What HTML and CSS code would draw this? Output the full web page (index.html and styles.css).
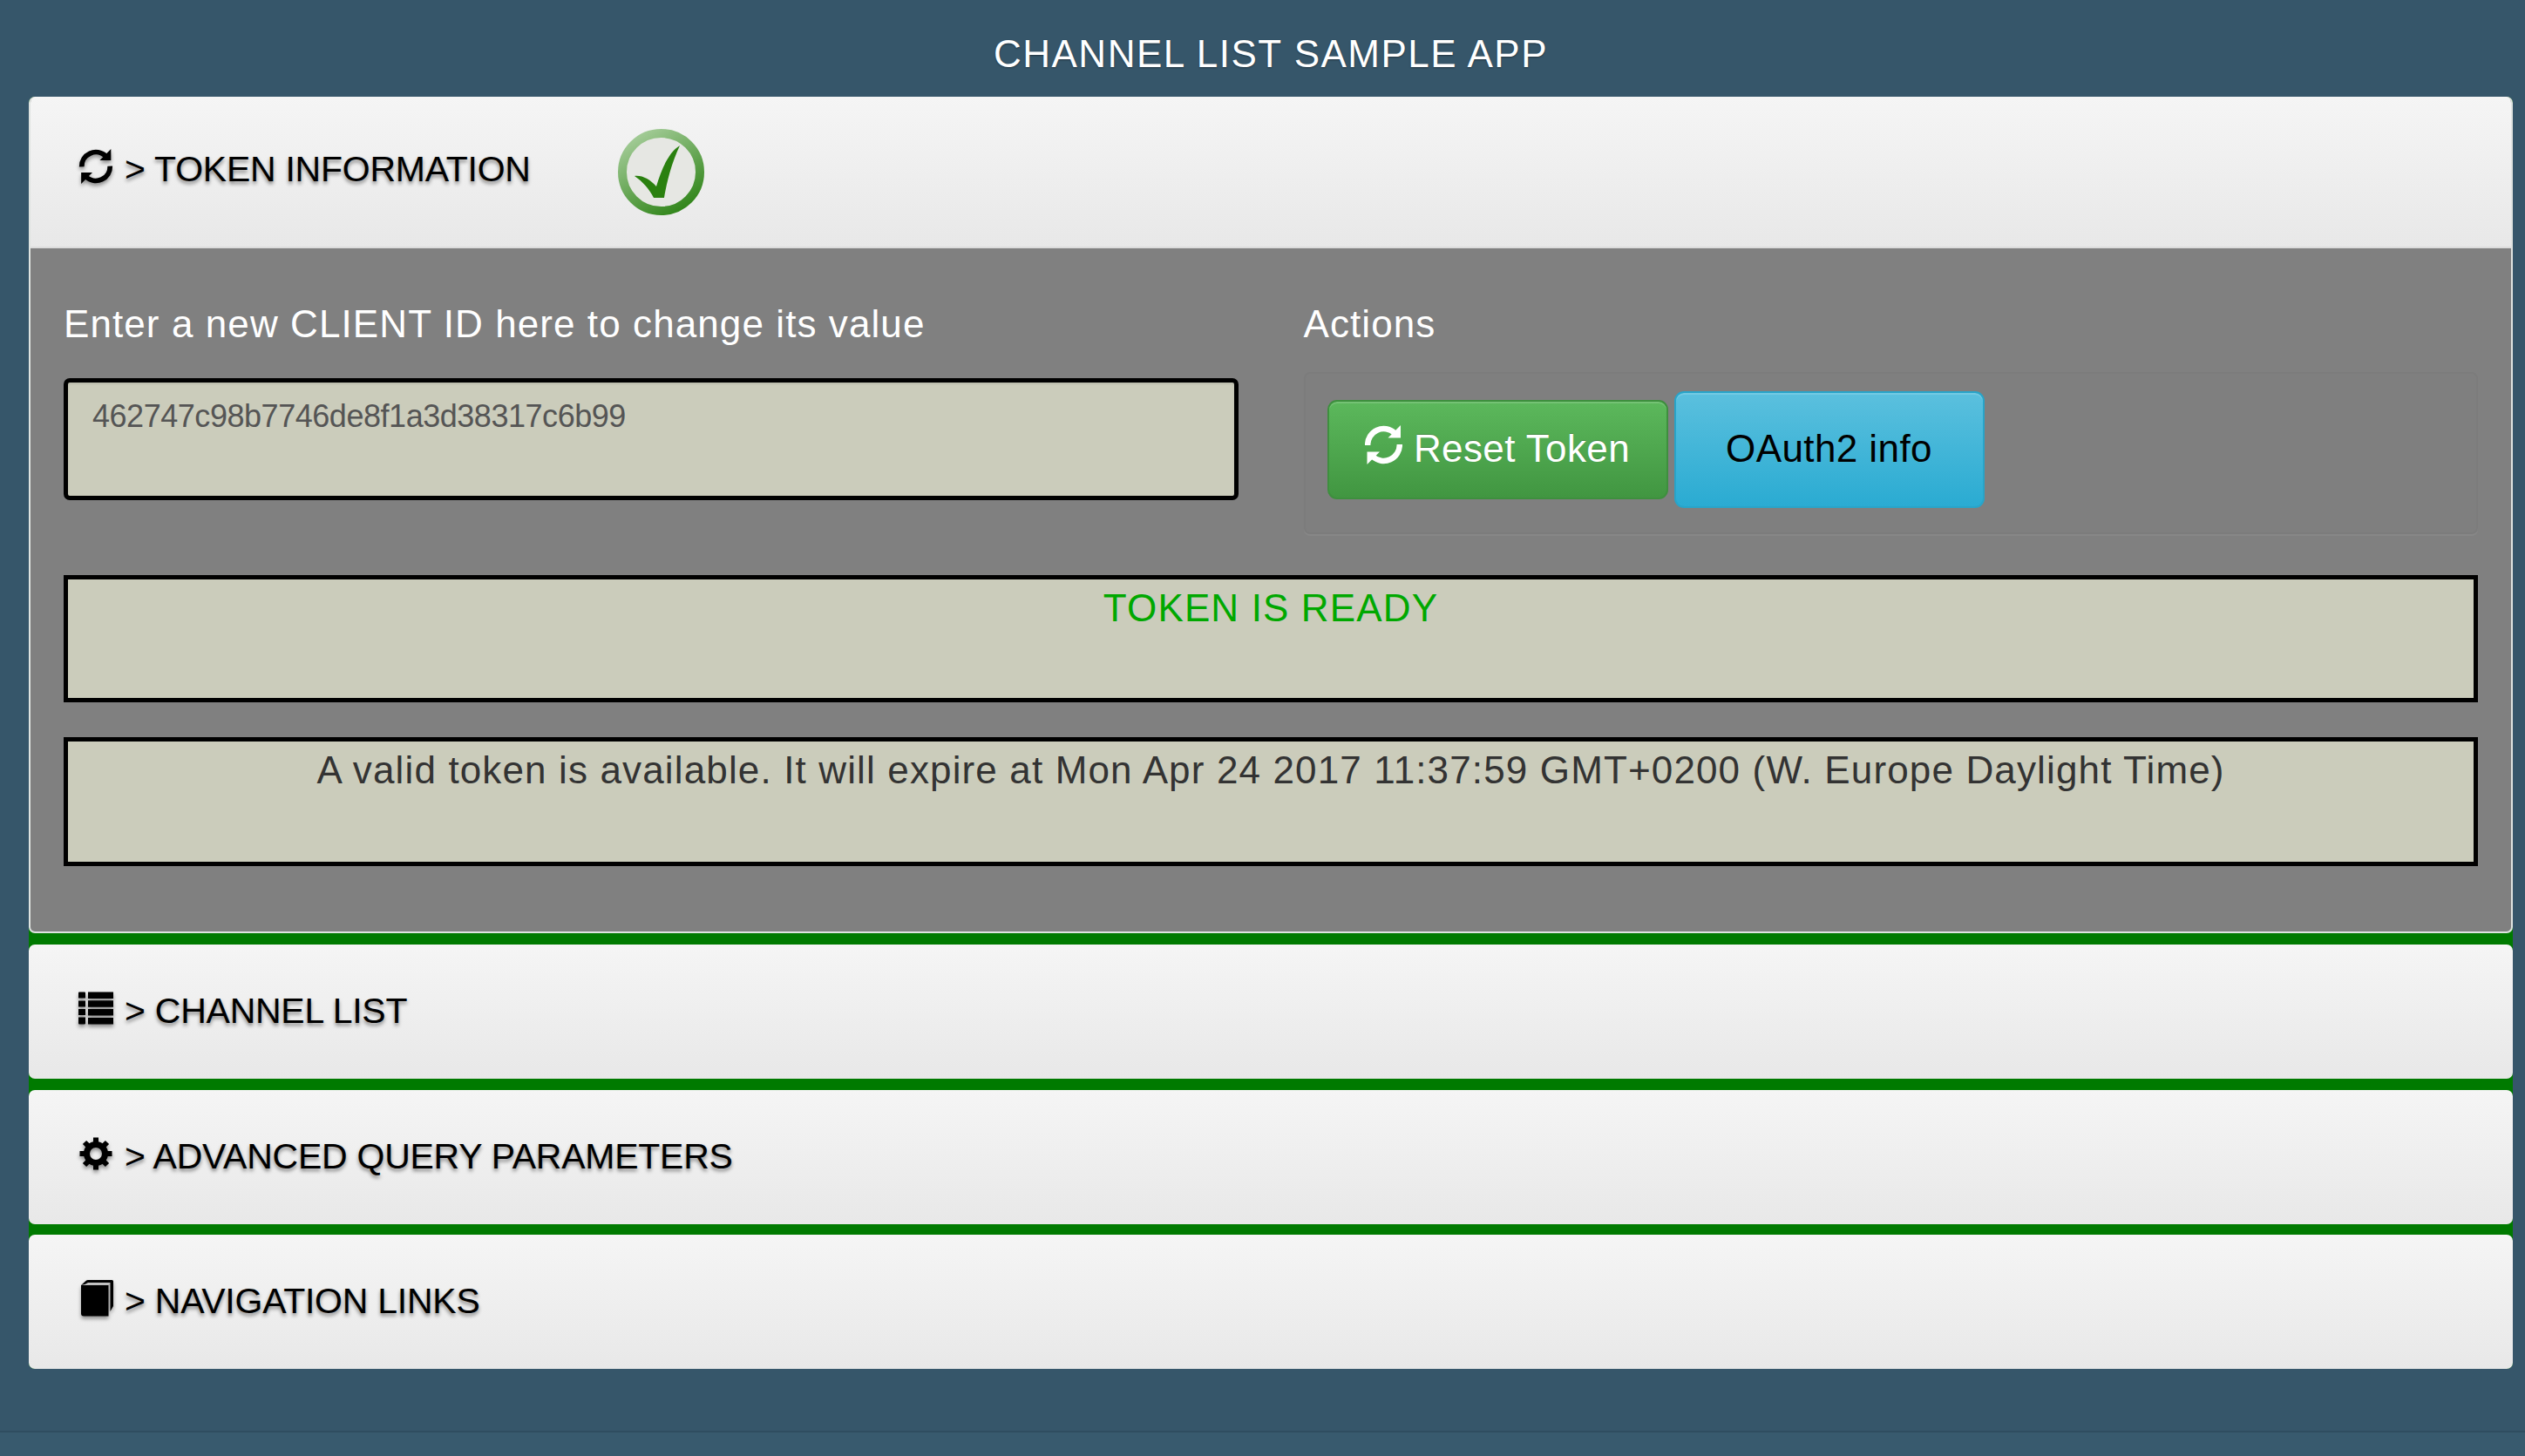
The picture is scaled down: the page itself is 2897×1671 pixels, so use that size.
FILE: index.html
```html
<!DOCTYPE html>
<html lang="en">
<head>
<meta charset="utf-8">
<title>Channel List Sample App</title>
<link rel="stylesheet" href="styles.css">
</head>
<body>
<svg class="defs" width="0" height="0" aria-hidden="true">
  <defs>
    <symbol id="i-refresh" viewBox="0 0 43 45" overflow="visible">
      <path d="M3.200 23 A18.300 18.300 0 0 1 34 9" fill="none" stroke="currentColor" stroke-width="6.500"/>
      <path d="M41 0 L41 14.500 L26.500 14.500 Z" fill="currentColor"/>
      <path d="M39.800 22 A18.300 18.300 0 0 1 9 36" fill="none" stroke="currentColor" stroke-width="6.500"/>
      <path d="M2.500 45 L2.500 30.500 L17 30.500 Z" fill="currentColor"/>
    </symbol>
    <symbol id="i-list" viewBox="-1 -1.500 42 40" overflow="visible">
      <path d="M1 0h6a1 1 0 0 1 1 1v6H0V1a1 1 0 0 1 1-1zM0 10h8v7H0zM0 19.500h8v7H0zM0 29h8v7a1 1 0 0 1-1 1H1a1 1 0 0 1-1-1zM11 0h29v7.500H11zM11 9.800h29v7.500H11zM11 19.600h29v7.500H11zM11 29.400h29v7.500H11z" fill="currentColor"/>
    </symbol>
    <symbol id="i-cog" viewBox="-2 -1 42 40" overflow="visible">
      <circle cx="19" cy="19" r="10.500" fill="none" stroke="currentColor" stroke-width="7"/>
      <path fill="none" stroke="currentColor" stroke-width="6" d="M19 8V0.500M19 30V37.500M8 19H0.500M30 19H37.500M11.200 11.200L6 6M26.800 26.800L32 32M26.800 11.200L32 6M11.200 26.800L6 32"/>
    </symbol>
    <symbol id="i-book" viewBox="-4 1 42 40" overflow="visible">
      <path fill="currentColor" d="M0 6 L5.500 1 Q6.500 0 8 0 H35.500 Q37 0 37 1.500 V30 L33.500 36 V3 H8 L4.500 5 Z"/>
      <path fill="currentColor" d="M0 6 H31.500 V41.500 H3 Q0 41.500 0 38.500 Z"/>
    </symbol>
    <linearGradient id="ring" x1="0.2" y1="0" x2="0.8" y2="1">
      <stop offset="0" stop-color="#a4cc98"/>
      <stop offset="1" stop-color="#2f8418"/>
    </linearGradient>
  </defs>
</svg>

<header class="app-title">CHANNEL LIST SAMPLE APP</header>

<main class="panel-group">
  <section class="panel panel-open">
    <div class="panel-heading">
      <h2 class="panel-title">
        <svg class="icon"><use href="#i-refresh"/></svg>
        <span>&gt; TOKEN INFORMATION</span>
      </h2>
      <svg class="status-check" viewBox="0 0 99 99" aria-hidden="true">
        <circle cx="49.500" cy="49.500" r="44.500" fill="#e6e7e3" stroke="url(#ring)" stroke-width="10"/>
        <path d="M19 54 C28 53 37 58 44 66 C50 46 58 27 71 19 C62 38 56 60 53 79 L41 79 C36 69 28 60 19 54 Z" fill="#2a800f"/>
      </svg>
    </div>
    <div class="panel-body">
      <div class="form-row">
        <div class="col">
          <label class="field-label" for="client-id">Enter a new CLIENT ID here to change its value</label>
          <textarea class="client-input" id="client-id" rows="2">462747c98b7746de8f1a3d38317c6b99</textarea>
        </div>
        <div class="col">
          <div class="field-label">Actions</div>
          <div class="well">
            <button class="btn btn-green" type="button">
              <svg class="icon-btn"><use href="#i-refresh"/></svg>
              <span>Reset Token</span>
            </button>
            <button class="btn btn-blue" type="button">OAuth2 info</button>
          </div>
        </div>
      </div>
      <div class="message message-ok">TOKEN IS READY</div>
      <div class="message message-info">A valid token is available. It will expire at Mon Apr 24 2017 11:37:59 GMT+0200 (W. Europe Daylight Time)</div>
    </div>
  </section>

  <section class="panel">
    <div class="panel-heading panel-heading-closed">
      <h2 class="panel-title"><svg class="icon"><use href="#i-list"/></svg><span>&gt; CHANNEL LIST</span></h2>
    </div>
  </section>

  <section class="panel">
    <div class="panel-heading panel-heading-closed">
      <h2 class="panel-title"><svg class="icon"><use href="#i-cog"/></svg><span>&gt; ADVANCED QUERY PARAMETERS</span></h2>
    </div>
  </section>

  <section class="panel">
    <div class="panel-heading panel-heading-closed">
      <h2 class="panel-title"><svg class="icon"><use href="#i-book"/></svg><span>&gt; NAVIGATION LINKS</span></h2>
    </div>
  </section>
</main>

<footer class="app-footer"></footer>
</body>
</html>
```

FILE: styles.css
```css
* { box-sizing: border-box; }

html, body { height: 100%; }

body {
  margin: 0;
  display: flex;
  flex-direction: column;
  background: #36566a;
  font-family: "Liberation Sans", Arial, sans-serif;
  color: #000;
}

.defs { position: absolute; }

.app-title {
  height: 111px;
  margin: 0 14px 0 33px;
  padding-top: 39px;
  line-height: 46px;
  text-align: center;
  font-size: 44px;
  letter-spacing: 1.5px;
  color: #fff;
  text-shadow: 0 1px 2px rgba(0, 0, 0, .4);
}

.panel-group {
  margin: 0 14px 0 33px;
  display: flex;
  flex-direction: column;
  gap: 12.5px;
  background: #007a00;
  border-radius: 7px;
}

.panel { border-radius: 7px; overflow: hidden; }

.panel-open {
  background: #808080;
  border: 2px solid #dfe3e0;
  border-top: 0;
  margin-bottom: 0.5px;
}

.panel-heading {
  display: flex;
  align-items: center;
  height: 174px;
  padding: 0 0 7px 56px;
  background: linear-gradient(#f5f5f5, #e8e8e8);
  border-bottom: 2px solid #dcdcdc;
}

.panel-open .panel-heading { margin: 0 -2px; }

.panel-heading-closed {
  height: 154px;
  padding-bottom: 2px;
  border-bottom: 0;
}

.panel-title {
  margin: 0;
  display: flex;
  align-items: center;
  gap: 12px;
  width: 620px;
  font-size: 41px;
  font-weight: 400;
  letter-spacing: -0.25px;
  line-height: 46px;
  text-shadow: 0 3px 4px rgba(0, 0, 0, .45);
}

.panel-heading-closed .panel-title { width: auto; }

.icon {
  width: 42px;
  height: 40px;
  margin-top: -6px;
  flex: none;
  overflow: visible;
  color: #000;
  filter: drop-shadow(0 3px 2px rgba(0, 0, 0, .4));
}

.status-check { width: 99px; height: 99px; flex: none; margin-top: 7px; }

.panel-body { padding: 56px 38px 75px; }

.form-row {
  display: grid;
  grid-template-columns: 1fr 1fr;
  column-gap: 75px;
  margin-bottom: 47px;
}

.field-label {
  display: block;
  height: 86px;
  padding-top: 8px;
  line-height: 46px;
  font-size: 44px;
  letter-spacing: 1.09px;
  color: #fff;
}

.client-input {
  display: block;
  width: 100%;
  height: 140px;
  margin-top: 7px;
  padding: 16px 28px;
  background: #cbccbb;
  border: 5px solid #000;
  border-radius: 7px;
  resize: none;
  outline: 0;
  font-family: "Liberation Sans", Arial, sans-serif;
  font-size: 36px;
  letter-spacing: -0.46px;
  line-height: 46px;
  color: #555;
  box-shadow: inset 0 2px 2px rgba(0, 0, 0, .08);
}

.well {
  display: flex;
  align-items: center;
  gap: 7px;
  height: 186px;
  padding: 0 25px 8px;
  background: #7f7f7f;
  border: 2px solid #7c7c7c;
  border-radius: 7px;
  box-shadow: 0 2px 0 rgba(255, 255, 255, .06);
}

.btn {
  display: flex;
  align-items: center;
  justify-content: center;
  padding: 0 0 3px;
  font-family: "Liberation Sans", Arial, sans-serif;
  font-size: 44px;
  letter-spacing: 0.4px;
  border-radius: 11px;
  cursor: pointer;
  box-shadow: inset 0 2px 0 rgba(255, 255, 255, .15);
}

.btn-green {
  width: 391px;
  height: 114px;
  gap: 13px;
  color: #fff;
  background: linear-gradient(#5cb85c, #419641);
  border: 2px solid #3e8f3e;
  text-shadow: 0 -1px 0 rgba(0, 0, 0, .2);
}

.icon-btn { width: 43px; height: 45px; margin-top: -8px; flex: none; color: #fff; }

.btn-blue {
  width: 356px;
  height: 134px;
  color: #000;
  background: linear-gradient(#5bc0de, #2aabd2);
  border: 2px solid #28a4c9;
}

.message {
  height: 146px;
  padding-top: 10px;
  background: #cbccbb;
  border: 5px solid #000;
  line-height: 46px;
  text-align: center;
  font-size: 44px;
  letter-spacing: 1.14px;
}

.message-ok { color: #00a800; margin-bottom: 40px; }

.message-info { height: 148px; color: #333; }

.app-footer {
  margin-top: 71px;
  flex: 1;
  background: #385a6e;
  border-top: 2px solid #2f4d60;
}
```
